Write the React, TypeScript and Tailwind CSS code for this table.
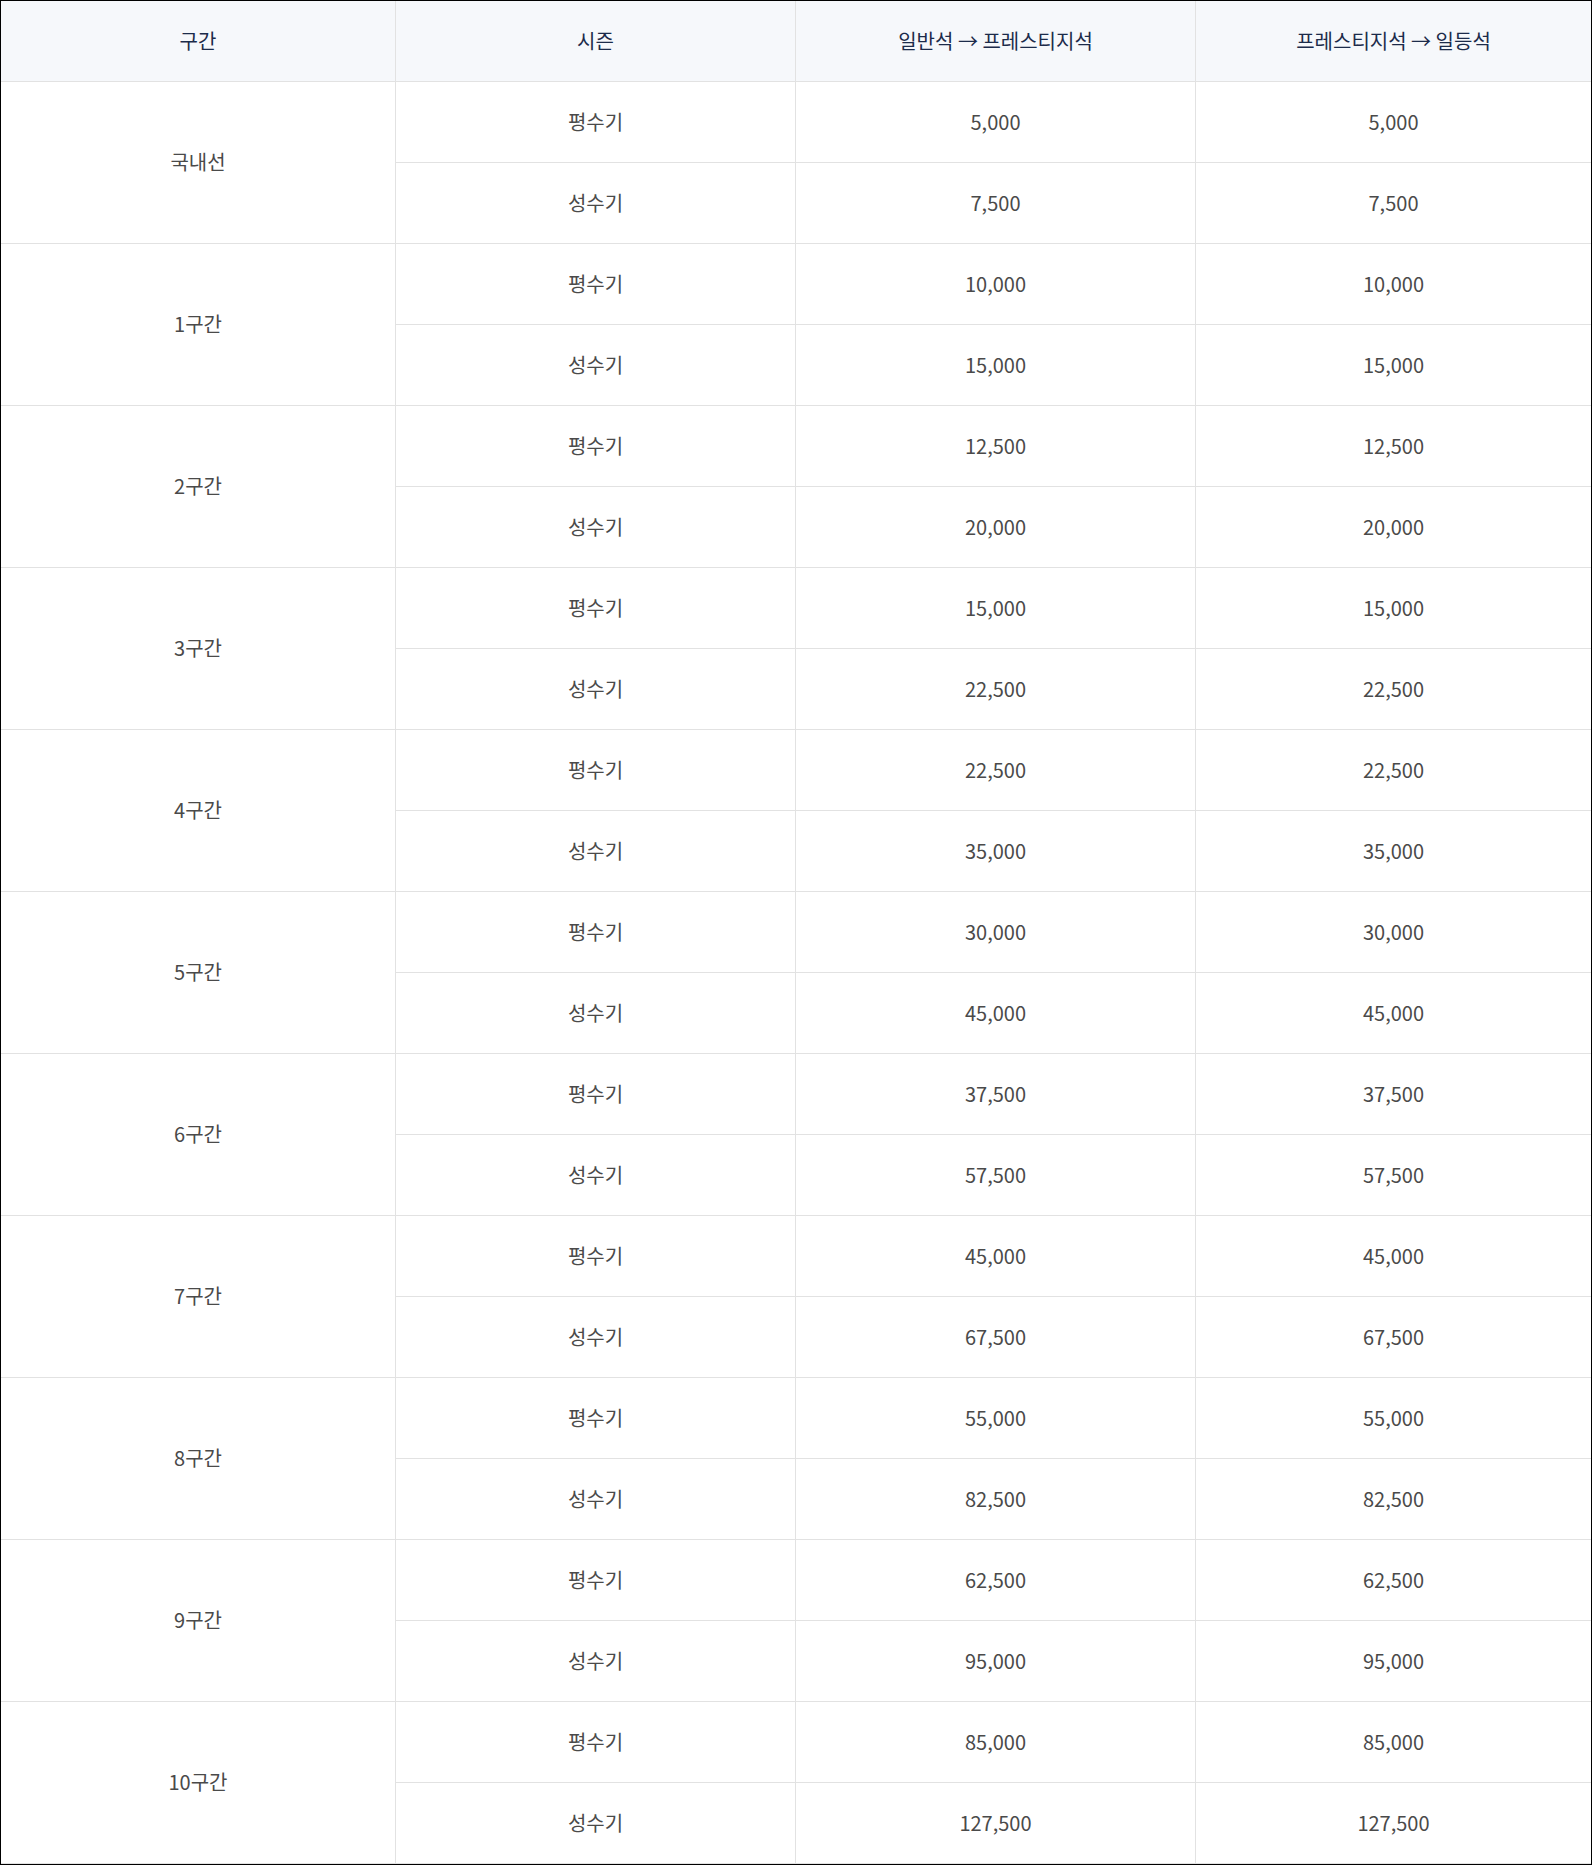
import React from 'react';

// Upgrade mileage table: each zone has an off-peak and a peak row.
const ZONES: { name: string; rows: [string, string, string][] }[] = [
  { name: '국내선', rows: [['평수기', '5,000', '5,000'], ['성수기', '7,500', '7,500']] },
  { name: '1구간', rows: [['평수기', '10,000', '10,000'], ['성수기', '15,000', '15,000']] },
  { name: '2구간', rows: [['평수기', '12,500', '12,500'], ['성수기', '20,000', '20,000']] },
  { name: '3구간', rows: [['평수기', '15,000', '15,000'], ['성수기', '22,500', '22,500']] },
  { name: '4구간', rows: [['평수기', '22,500', '22,500'], ['성수기', '35,000', '35,000']] },
  { name: '5구간', rows: [['평수기', '30,000', '30,000'], ['성수기', '45,000', '45,000']] },
  { name: '6구간', rows: [['평수기', '37,500', '37,500'], ['성수기', '57,500', '57,500']] },
  { name: '7구간', rows: [['평수기', '45,000', '45,000'], ['성수기', '67,500', '67,500']] },
  { name: '8구간', rows: [['평수기', '55,000', '55,000'], ['성수기', '82,500', '82,500']] },
  { name: '9구간', rows: [['평수기', '62,500', '62,500'], ['성수기', '95,000', '95,000']] },
  { name: '10구간', rows: [['평수기', '85,000', '85,000'], ['성수기', '127,500', '127,500']] },
];

const HEADERS = ['구간', '시즌', '일반석 → 프레스티지석', '프레스티지석 → 일등석'];

const cell = 'flex items-center justify-center pb-px border-b border-[#e2e2e2]';

export default function App() {
  return (
    <div
      className="w-[1592px] border border-black bg-white text-[20px] leading-none"
      style={{ fontFamily: '"Noto Sans CJK KR", "Noto Sans", sans-serif' }}
    >
      <div className="grid grid-cols-[394px_400px_400px_396px] auto-rows-[81px]">
        {HEADERS.map((h, i) => (
          <div
            key={h}
            className={`${cell} bg-[#f6f8fb] text-[#1c2b4a] ${i > 0 ? 'border-l' : ''}`}
          >
            {h}
          </div>
        ))}
        {ZONES.map(z => (
          <React.Fragment key={z.name}>
            <div className={`${cell} row-span-2 text-[#4a4a4a]`}>{z.name}</div>
            {z.rows.map(([season, a, b]) => (
              <React.Fragment key={season}>
                <div className={`${cell} border-l text-[#4a4a4a]`}>{season}</div>
                <div className={`${cell} border-l text-[#4a4a4a]`}>{a}</div>
                <div className={`${cell} border-l text-[#4a4a4a]`}>{b}</div>
              </React.Fragment>
            ))}
          </React.Fragment>
        ))}
      </div>
    </div>
  );
}
